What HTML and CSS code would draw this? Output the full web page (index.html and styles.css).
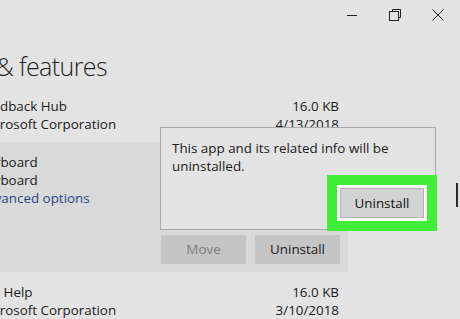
FILE: index.html
```html
<!DOCTYPE html>
<html lang="en">

<head>
  <meta charset="UTF-8">
  <meta name="viewport" content="width=device-width, initial-scale=1.0">
  <title>Apps &amp; features</title>
  <link rel="stylesheet" href="styles.css">
</head>

<body>
  <div id="app">
    <div class="titlebar">
      <div class="cap-btn">
        <svg width="12" height="12" viewBox="0 0 12 12"><path d="M1 6.5h10" stroke="#222" stroke-width="1" fill="none" /></svg>
      </div>
      <div class="cap-btn">
        <svg width="12" height="12" viewBox="0 0 12 12">
          <path d="M3.5 2.5V0.5h8v8h-2" stroke="#222" stroke-width="1" fill="none" />
          <rect x="0.5" y="2.5" width="9" height="9" stroke="#222" stroke-width="1" fill="none" />
        </svg>
      </div>
      <div class="cap-btn">
        <svg width="12" height="12" viewBox="0 0 12 12"><path d="M0.5 0.5l11 11M11.5 0.5l-11 11" stroke="#222" stroke-width="1" fill="none" /></svg>
      </div>
    </div>

    <div class="content">
      <h1 class="title">Apps &amp; features</h1>

      <div class="list">
        <div class="row">
          <div class="info">
            <div class="name">Feedback Hub</div>
            <div class="sub">Microsoft Corporation</div>
          </div>
          <div class="meta">
            <div>16.0 KB</div>
            <div>4/13/2018</div>
          </div>
        </div>

        <div class="row selected">
          <div class="info">
            <div class="name">Keyboard</div>
            <div class="sub">Keyboard</div>
            <div class="link">Advanced options</div>
          </div>
          <div class="actions">
            <div class="btn disabled">Move</div>
            <div class="btn">Uninstall</div>
          </div>
        </div>

        <div class="row">
          <div class="info">
            <div class="name">Get Help</div>
            <div class="sub">Microsoft Corporation</div>
          </div>
          <div class="meta">
            <div>16.0 KB</div>
            <div>3/10/2018</div>
          </div>
        </div>
      </div>
    </div>

    <!-- flyout over the list -->
    <div class="flyout">
      <div class="flyout-text">This app and its related info will be uninstalled.</div>
      <div class="flyout-foot">
        <div class="btn-confirm">Uninstall</div>
      </div>
    </div>

    <div class="scroll-thumb"></div>
  </div>
</body>

</html>
```

FILE: styles.css
```css
html,
body {
  margin: 0;
  width: 100%;
  height: 100%;
  overflow: hidden;
}

body {
  background-color: #e3e3e3;
  font-family: "Open Sans", "Noto Sans", sans-serif;
  color: #1b1b1b;
  font-size: 13.4px;
}

#app {
  position: relative;
  width: 460px;
  height: 319px;
  overflow: hidden;
}

.titlebar {
  display: flex;
  justify-content: flex-end;
  height: 30px;
  padding-right: 1px;
}

.cap-btn {
  width: 43px;
  height: 30px;
  display: flex;
  align-items: center;
  justify-content: center;
}

.content {
  margin-left: -64px;
}

.title {
  margin: 16px 0 0 0;
  font-size: 25px;
  font-weight: 300;
  letter-spacing: -0.6px;
  line-height: 40px;
  color: #1f1f1f;
}

.list {
  margin-left: 42px;
  width: 370px;
}

.row {
  display: flex;
  justify-content: space-between;
  padding: 11px 9px 9px 0;
  line-height: 18px;
}

.row.selected {
  flex-direction: column;
  background-color: #d9d9d9;
  padding: 11px 8px 8px 0;
}

.meta {
  text-align: right;
}

.link {
  color: #1d4a86;
}

.actions {
  display: flex;
  justify-content: flex-end;
  gap: 9px;
  margin-top: 28px;
}

.btn {
  width: 85px;
  height: 29px;
  line-height: 29px;
  text-align: center;
  background-color: #c5c5c5;
  color: #1b1b1b;
}

.btn.disabled {
  color: #7c7c7c;
}

.flyout {
  position: absolute;
  left: 160px;
  top: 127px;
  width: 255px;
  height: 93px;
  border: 1px solid #a9a9a9;
  background-color: #e3e3e3;
  display: flex;
  flex-direction: column;
  justify-content: space-between;
  padding: 0 8px 8px 11px;
  line-height: 18px;
}

.flyout-text {
  padding-top: 11px;
}

.flyout-foot {
  display: flex;
  justify-content: flex-end;
}

.btn-confirm {
  width: 84px;
  height: 30px;
  line-height: 30px;
  text-align: center;
  background-color: #d3d3d3;
  border: 3px solid #fff;
  box-shadow: inset 0 0 0 1px #b4b4b4;
  outline: 10px solid #41ee3a;
  color: #111;
}

.scroll-thumb {
  position: absolute;
  left: 456px;
  top: 183px;
  width: 2px;
  height: 24px;
  background-color: #2a2a2a;
}
```
